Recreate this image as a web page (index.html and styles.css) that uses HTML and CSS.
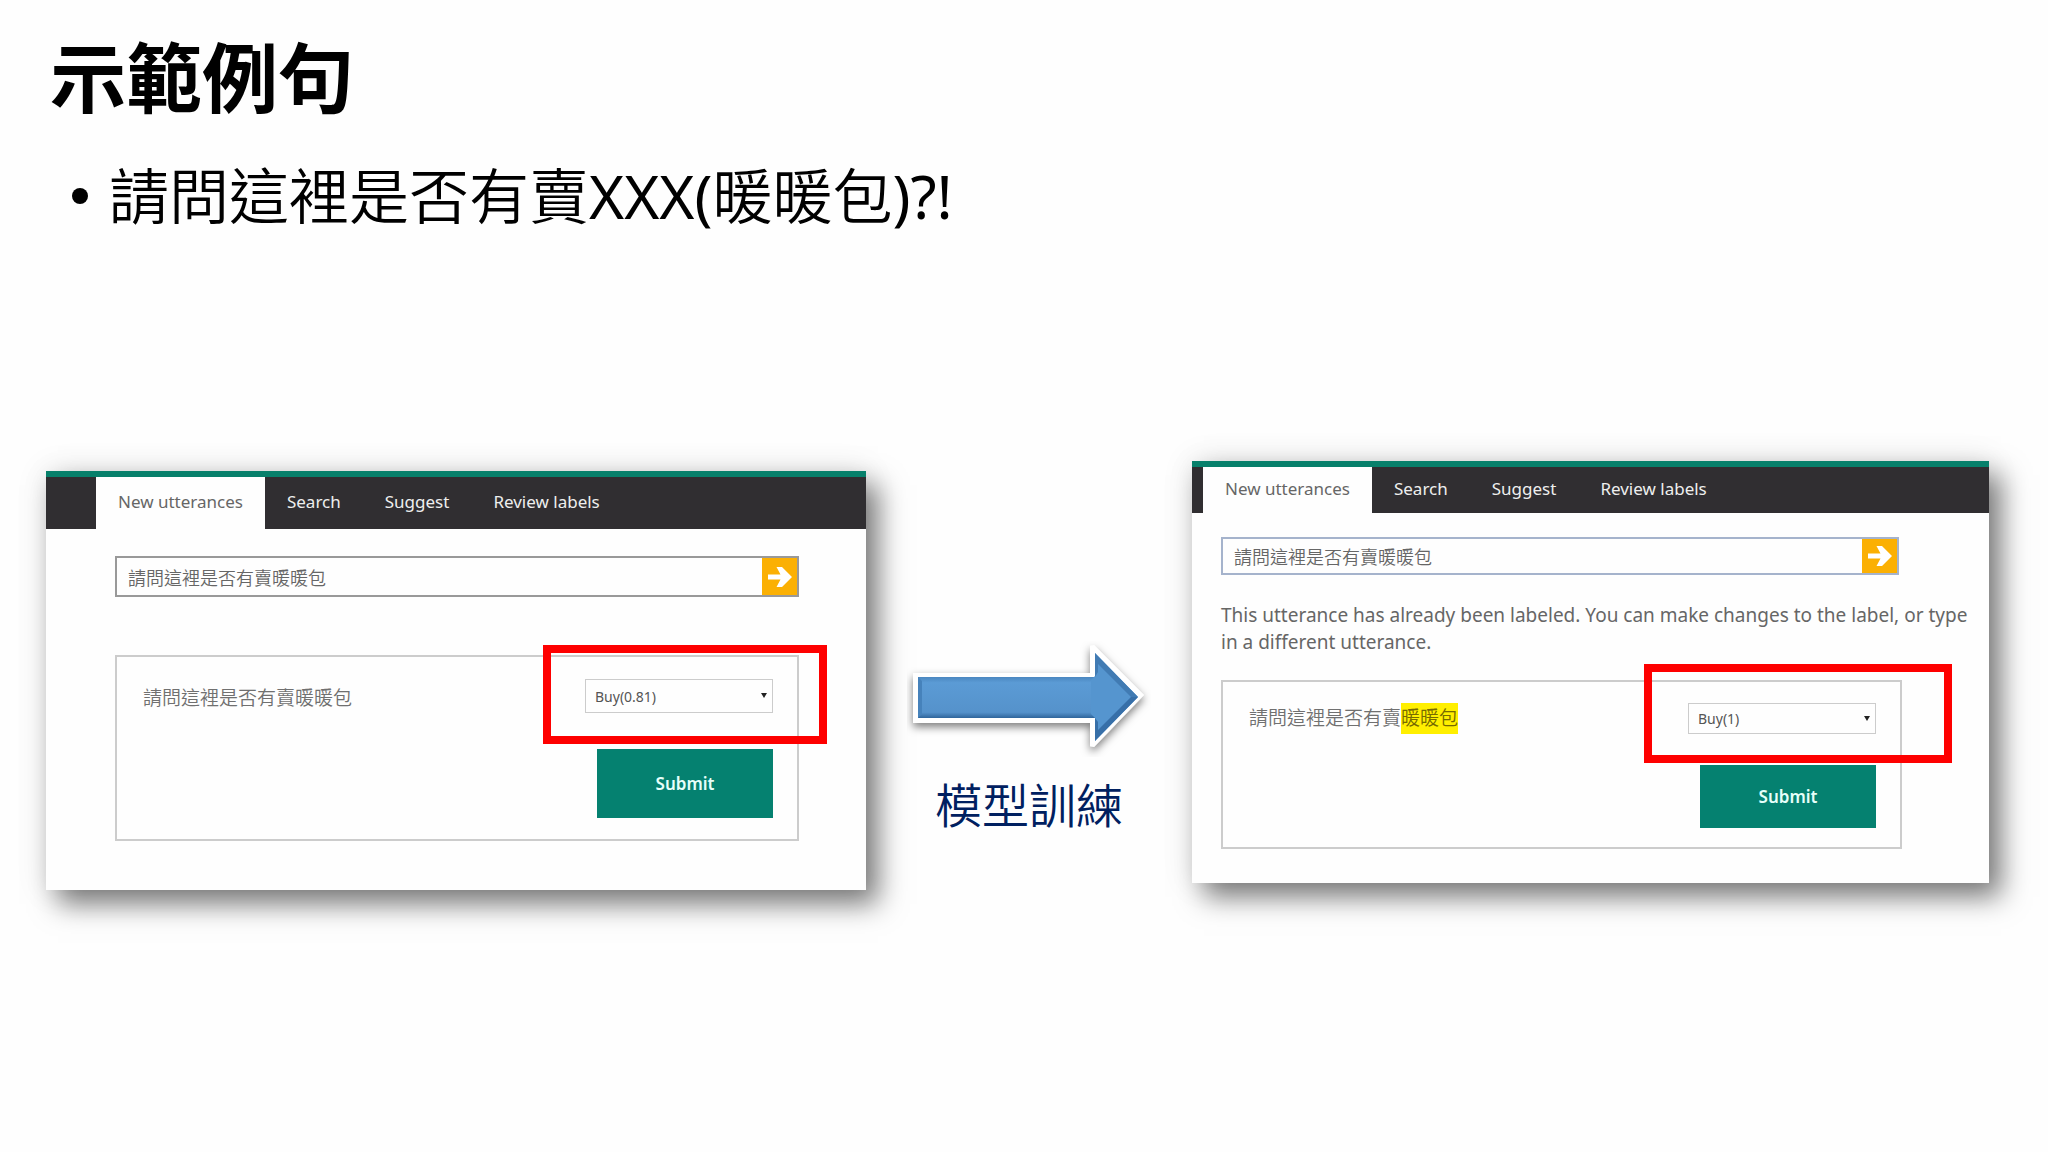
FILE: index.html
```html
<!DOCTYPE html>
<html lang="zh-Hant">
<head>
    <meta charset="UTF-8">
    <meta name="viewport" content="width=device-width, initial-scale=1.0">
    <title>示範例句</title>
    <link rel="stylesheet" href="styles.css">
</head>
<body>
    <header class="slide-header">
        <h1>示範例句</h1>
        <ul class="points">
            <li><span>請問這裡是否有賣<span class="latin">XXX(</span>暖暖包<span class="latin">)?!</span></span></li>
        </ul>
    </header>

    <main class="compare">
        <!-- Before training -->
        <section class="panel panel-before">
            <nav class="tabs">
                <a href="#" class="tab active">New utterances</a>
                <a href="#" class="tab">Search</a>
                <a href="#" class="tab">Suggest</a>
                <a href="#" class="tab">Review labels</a>
            </nav>
            <div class="panel-body">
                <form class="search">
                    <input type="text" value="請問這裡是否有賣暖暖包" aria-label="Utterance">
                    <button type="button" aria-label="Go">
                        <svg viewBox="0 0 24 24" width="24" height="24"><path d="M0 9.5h12.5L8.5 2h5.5L24 12l-10 10H8.5l4-7.5H0z" fill="#fff"/></svg>
                    </button>
                </form>
                <form class="result">
                    <label class="utterance" for="intent-before">請問這裡是否有賣暖暖包</label>
                    <div class="actions">
                        <div class="select">
                            <select id="intent-before"><option>Buy(0.81)</option></select>
                        </div>
                        <button type="button" class="submit">Submit</button>
                    </div>
                    <div class="marker"></div>
                </form>
            </div>
        </section>

        <div class="step">
            <svg class="arrow" viewBox="0 0 244 116" width="244" height="116">
                <defs>
                    <filter id="drop" x="-10%" y="-10%" width="120%" height="130%">
                        <feDropShadow dx="0" dy="4" stdDeviation="4" flood-color="#000" flood-opacity="0.5"/>
                    </filter>
                    <linearGradient id="shaft" x1="0" y1="0" x2="0" y2="1">
                        <stop offset="0" stop-color="#4b87c0"/>
                        <stop offset="0.14" stop-color="#5b9bd5"/>
                        <stop offset="0.86" stop-color="#5592cb"/>
                        <stop offset="1" stop-color="#2f659b"/>
                    </linearGradient>
                </defs>
                <path filter="url(#drop)" fill="#fff" d="M6 32h177V5l4-1 50 50-50 52-4-1V82H6z"/>
                <path fill="#5595cf" d="M11 36h177V12l43 44-43 44V77H11z"/>
                <path fill="url(#shaft)" d="M11 36h177v41H11z"/>
                <path fill="#5595cf" d="M184 39l10-10 30 27-30 27-10-10z"/>
                <path fill="#417bb3" d="M188 12l43 44h-7l-33-33v8l-3 5z"/>
                <path fill="#376fa8" d="M188 100l43-44h-7l-33 33v-8l-3-4z"/>
                <path fill="#4682bb" d="M11 36l4 4v33l-4 4z"/>
            </svg>
            <p class="step-label">模型訓練</p>
        </div>

        <!-- After training -->
        <section class="panel panel-after">
            <nav class="tabs">
                <a href="#" class="tab active">New utterances</a>
                <a href="#" class="tab">Search</a>
                <a href="#" class="tab">Suggest</a>
                <a href="#" class="tab">Review labels</a>
            </nav>
            <div class="panel-body">
                <form class="search">
                    <input type="text" value="請問這裡是否有賣暖暖包" aria-label="Utterance">
                    <button type="button" aria-label="Go">
                        <svg viewBox="0 0 24 24" width="24" height="24"><path d="M0 9.5h12.5L8.5 2h5.5L24 12l-10 10H8.5l4-7.5H0z" fill="#fff"/></svg>
                    </button>
                </form>
                <p class="message">This utterance has already been labeled. You can make changes to the label, or type in a different utterance.</p>
                <form class="result">
                    <label class="utterance" for="intent-after">請問這裡是否有賣<mark>暖暖包</mark></label>
                    <div class="actions">
                        <div class="select">
                            <select id="intent-after"><option>Buy(1)</option></select>
                        </div>
                        <button type="button" class="submit">Submit</button>
                    </div>
                    <div class="marker"></div>
                </form>
            </div>
        </section>
    </main>
</body>
</html>
```
FILE: styles.css
```css
* {
    box-sizing: border-box;
}
body {
    margin: 0;
    background: #fefefe;
    color: #000;
    font-family: "Noto Sans", "Noto Sans CJK TC", sans-serif;
}
h1, p, ul {
    margin: 0;
    padding: 0;
}

/* Slide heading */
.slide-header {
    padding: 28px 50px 0;
}
.slide-header h1 {
    font-size: 76px;
    line-height: 100px;
    font-weight: bold;
}
.points {
    list-style: none;
    padding: 28px 22px 0;
}
.points li {
    display: flex;
    align-items: center;
    gap: 21px;
    font-size: 60px;
    line-height: 80px;
    font-weight: 350;
}
.points li::before {
    content: "";
    width: 16px;
    height: 16px;
    border-radius: 50%;
    background: #000;
}
.latin {
    font-weight: 400;
}

/* Before / after */
.compare {
    display: grid;
    grid-template-columns: 820fr 326px 797fr;
    align-items: start;
    padding: 225px 59px 60px 46px;
}
.panel {
    background: #fefefe;
    border-top: 6px solid #07806b;
    box-shadow: 12px 14px 26px rgba(0, 0, 0, 0.5), 0 0 30px rgba(0, 0, 0, 0.1);
}
.panel-before {
    margin-top: 10px;
}
.tabs {
    display: flex;
    background: #302e31;
    padding-left: 50px;
}
.tab {
    padding: 0 22px 2px;
    font-size: 17px;
    line-height: 50px;
    color: #eee;
    text-decoration: none;
}
.tab.active {
    background: #fefefe;
    color: #666;
}
.panel-body {
    padding: 27px 67px 49px 69px;
}
.search {
    display: flex;
    height: 41px;
    border: 2px solid #999;
}
.search input {
    flex: 1;
    min-width: 0;
    padding: 0 11px;
    border: 0;
    background: transparent;
    font-family: inherit;
    font-size: 18px;
    font-weight: 350;
    color: #666;
}
.search button {
    display: flex;
    align-items: center;
    justify-content: center;
    width: 35px;
    padding: 0;
    border: 0;
    background: #fbb003;
}
.result {
    position: relative;
    display: flex;
    justify-content: space-between;
    height: 186px;
    margin-top: 58px;
    padding: 22px 24px 0 26px;
    border: 2px solid #ccc;
}
.utterance {
    font-size: 19px;
    line-height: 38px;
    font-weight: 350;
    color: #707070;
}
.utterance mark {
    display: inline-block;
    line-height: 31px;
    background: #ffef00;
    color: #776a00;
}
.actions {
    display: flex;
    flex-direction: column;
    align-items: flex-end;
    gap: 36px;
}
.select {
    position: relative;
    width: 188px;
}
.select select {
    display: block;
    width: 100%;
    height: 34px;
    padding: 0 9px;
    appearance: none;
    border: 1px solid #ccc;
    border-radius: 0;
    background: transparent;
    font-family: inherit;
    font-size: 14px;
    color: #555;
}
.select::after {
    content: "";
    position: absolute;
    top: 14px;
    right: 6px;
    border: 3px solid transparent;
    border-top: 5px solid #222;
    border-bottom: 0;
}
.submit {
    width: 176px;
    height: 69px;
    border: 0;
    background: #058170;
    color: #e6fffa;
    font-family: inherit;
    font-size: 17px;
    font-weight: 600;
}

/* Red box drawn over the intent drop-down */
.marker {
    position: absolute;
    top: -12px;
    right: -30px;
    width: 284px;
    height: 99px;
    border: 8px solid #fe0000;
    pointer-events: none;
}

/* Arrow between the panels */
.step {
    display: flex;
    flex-direction: column;
    align-items: center;
    padding-top: 180px;
}
.arrow {
    display: block;
}
.step-label {
    padding-top: 20px;
    font-size: 47px;
    line-height: 56px;
    font-weight: 350;
    color: #002060;
}

/* The second panel is a little tighter */
.panel-after .tabs {
    padding-left: 11px;
}
.panel-after .tab {
    line-height: 44px;
}
.panel-after .panel-body {
    padding: 24px 20px 34px 29px;
}
.panel-after .search {
    height: 38px;
    margin-right: 70px;
    border-color: #a5b3cc;
}
.panel-after .message {
    padding-top: 27px;
    font-size: 19px;
    line-height: 27px;
    color: #666;
}
.panel-after .result {
    height: 169px;
    margin: 24px 67px 0 0;
    padding-top: 21px;
}
.panel-after .utterance {
    line-height: 31px;
}
.panel-after .actions {
    gap: 31px;
}
.panel-after .select select {
    height: 31px;
}
.panel-after .select::after {
    top: 13px;
}
.panel-after .submit {
    height: 63px;
}
.panel-after .marker {
    top: -18px;
    right: -52px;
    width: 308px;
}
```
